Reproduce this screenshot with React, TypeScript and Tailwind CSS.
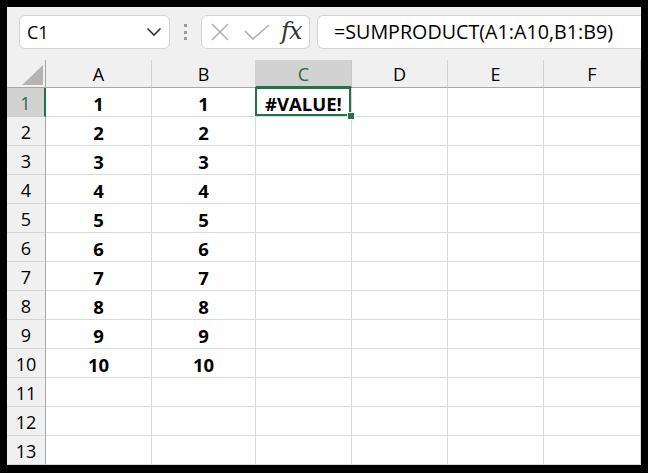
import React from 'react';

const COLS = ['A', 'B', 'C', 'D', 'E', 'F'];
const WIDTHS = ['w-[106px]', 'w-[104px]', 'w-[96px]', 'w-[96px]', 'w-[96px]', 'w-[97px]'];
const ROWS = Array.from({ length: 13 }, (_, i) => i + 1);

function cellValue(r: number, c: string): string {
  if ((c === 'A' || c === 'B') && r <= 10) return String(r);
  if (c === 'C' && r === 1) return '#VALUE!';
  return '';
}

export default function App() {
  return (
    <div className="w-[648px] h-[473px] bg-black p-[7px] font-['Open_Sans',sans-serif] text-black">
      <div className="w-[634px] h-[458px] bg-white flex flex-col overflow-hidden">
        <Toolbar />
        <div className="flex h-[28px] bg-[#f0f0f0]">
          <div className="w-[39px] h-full border-r border-b border-[#a6a6a6] relative">
            <svg className="absolute left-[15px] top-[5px]" width="21" height="20" viewBox="0 0 21 20">
              <polygon points="21,0 21,20 0,20" fill="#b4b4b4" />
            </svg>
          </div>
          {COLS.map((c, i) => (
            <div
              key={c}
              className={`${WIDTHS[i]} h-full flex items-center justify-center text-[18px] border-r ${
                c === 'C'
                  ? 'bg-[#d2d2d2] text-[#1e6e42] border-r-[#c8c8c8] border-b-2 border-b-[#217346]'
                  : 'border-r-[#d0d0d0] border-b border-b-[#a6a6a6]'
              }`}
            >
              <span className="pt-[2px]">{c}</span>
            </div>
          ))}
        </div>
        {ROWS.map((r) => (
          <div key={r} className={`flex h-[29px] ${r === 1 ? 'relative z-10' : ''}`}>
            <div
              className={`w-[39px] h-full flex items-center justify-center text-[18px] border-b ${
                r === 1
                  ? 'bg-[#d2d2d2] text-[#1e6e42] border-r-2 border-r-[#217346] border-b-[#c8c8c8]'
                  : 'bg-[#f0f0f0] border-r border-r-[#a6a6a6] border-b-[#d4d4d4]'
              }`}
            >
              <span className="pt-[2px]">{r}</span>
            </div>
            {COLS.map((c, i) => {
              const selected = c === 'C' && r === 1;
              return (
                <div
                  key={c}
                  className={`${WIDTHS[i]} h-full relative flex items-center justify-center border-r border-b border-[#dadada] text-[18.5px] font-bold ${selected ? 'z-10' : ''}`}
                >
                  <span className="pt-[4px]">{cellValue(r, c)}</span>
                  {selected && (
                    <>
                      <div className="absolute -left-[1px] -top-[1px] right-0 bottom-0 border-2 border-[#217346] pointer-events-none" />
                      <div className="absolute -right-[4px] -bottom-[4px] w-[8px] h-[8px] bg-[#217346] border border-white" />
                    </>
                  )}
                </div>
              );
            })}
          </div>
        ))}
      </div>
    </div>
  );
}

function Toolbar() {
  return (
    <div className="h-[53px] shrink-0 bg-[#f0f0f0] flex items-start pt-[8px] pl-[12px]">
      <div className="w-[151px] h-[34px] rounded-[6px] border border-[#d4d4d4] bg-white flex items-center justify-between pl-[7px] pr-[7px]">
        <span className="text-[18px] leading-none">C1</span>
        <svg width="16" height="10" viewBox="0 0 16 10" fill="none">
          <path d="M1.5 1.5 L8 8 L14.5 1.5" stroke="#333" strokeWidth="1.6" />
        </svg>
      </div>
      <div className="w-[31px] h-[34px] flex flex-col items-center justify-center gap-[3.5px]">
        <div className="w-[3px] h-[3px] bg-[#9a9a9a]" />
        <div className="w-[3px] h-[3px] bg-[#9a9a9a]" />
        <div className="w-[3px] h-[3px] bg-[#9a9a9a]" />
      </div>
      <div className="w-[109px] h-[34px] rounded-[6px] border border-[#d4d4d4] bg-white flex items-center pl-[9px]">
        <svg width="18" height="18" viewBox="0 0 18 18" fill="none">
          <path d="M1 1 L17 17 M17 1 L1 17" stroke="#a8a8a8" strokeWidth="1.4" />
        </svg>
        <svg className="ml-[15px]" width="26" height="16" viewBox="0 0 26 16" fill="none">
          <path d="M1 7 L9 15 L25 1" stroke="#a8a8a8" strokeWidth="1.4" />
        </svg>
        <span className="ml-[11px] font-['DejaVu_Serif',serif] italic text-[24px] leading-none text-[#333] -mt-[3px] tracking-[-1px]">fx</span>
      </div>
      <div className="ml-[7px] flex-1 h-[34px] rounded-l-[6px] border border-r-0 border-[#d4d4d4] bg-white flex items-center pl-[16px]">
        <span className="text-[19.7px] leading-none whitespace-nowrap">=SUMPRODUCT(A1:A10,B1:B9)</span>
      </div>
    </div>
  );
}
